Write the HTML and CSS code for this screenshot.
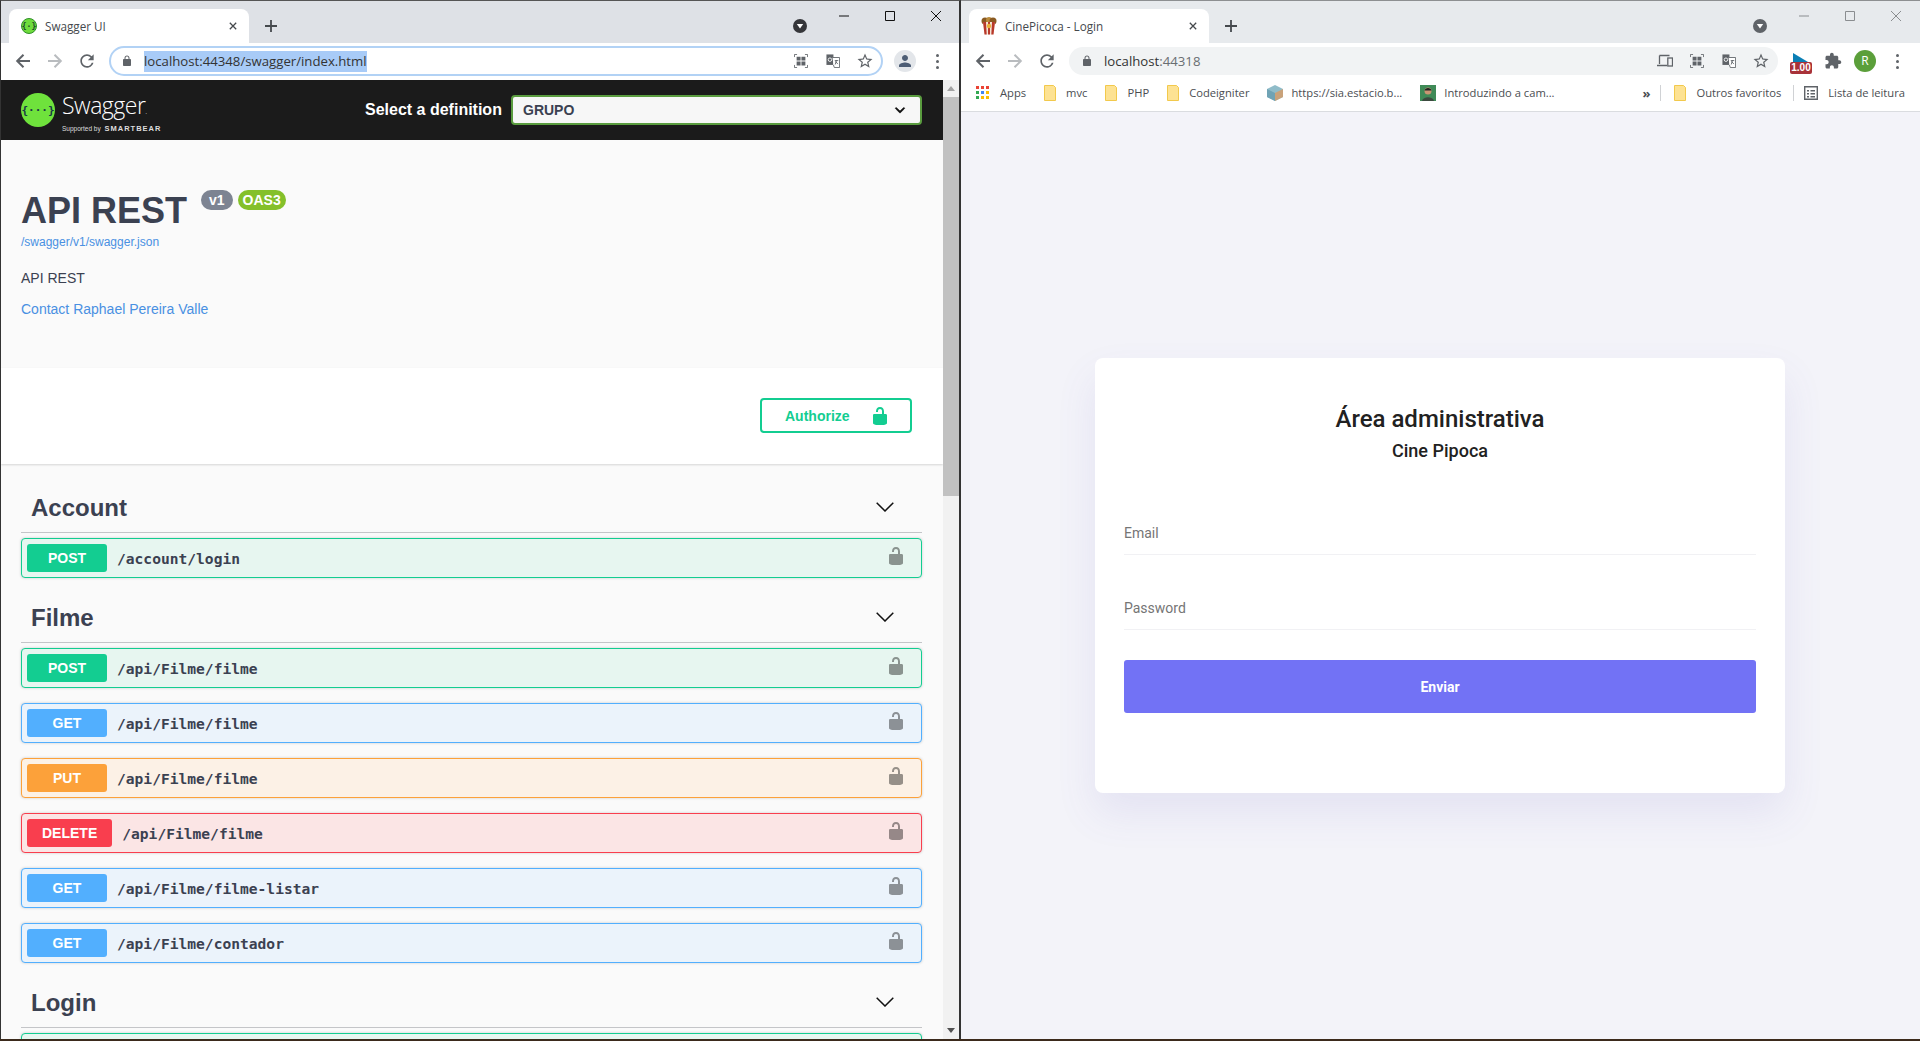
FILE: index.html
```html
<!DOCTYPE html>
<html lang="pt-br">
<head>
    <meta charset="UTF-8">
    <meta name="viewport" content="width=device-width, initial-scale=1.0">
    <title>Swagger UI e CinePicoca - Login</title>
    <link rel="stylesheet" href="styles.css">
</head>
<body>
    <svg class="icon-defs" aria-hidden="true">
        <symbol id="i-back" viewBox="0 0 16 16"><path d="M15 8H2.5M8.5 1.7 2.2 8l6.3 6.3" fill="none" stroke="currentColor" stroke-width="2"/></symbol>
        <symbol id="i-forward" viewBox="0 0 16 16"><path d="M1 8h12.5M7.5 1.7 13.8 8l-6.3 6.3" fill="none" stroke="currentColor" stroke-width="2"/></symbol>
        <symbol id="i-reload" viewBox="0 0 24 24"><path d="M17.65 6.35A7.958 7.958 0 0 0 12 4c-4.42 0-7.99 3.58-7.99 8s3.57 8 7.99 8c3.73 0 6.84-2.55 7.73-6h-2.08A5.99 5.99 0 0 1 12 18c-3.31 0-6-2.69-6-6s2.69-6 6-6c1.66 0 3.14.69 4.22 1.78L13 11h7V4l-2.35 2.35z" fill="currentColor"/></symbol>
        <symbol id="i-lock" viewBox="0 0 24 24"><path d="M18 8h-1V6c0-2.76-2.24-5-5-5S7 3.24 7 6v2H6c-1.1 0-2 .9-2 2v10c0 1.1.9 2 2 2h12c1.1 0 2-.9 2-2V10c0-1.1-.9-2-2-2zM9 6c0-1.66 1.34-3 3-3s3 1.34 3 3v2H9V6z" fill="currentColor"/></symbol>
        <symbol id="i-star" viewBox="0 0 24 24"><path d="M22 9.24l-7.19-.62L12 2 9.19 8.63 2 9.24l5.46 4.73L5.82 21 12 17.27 18.18 21l-1.63-7.03L22 9.24zM12 15.4l-3.76 2.27 1-4.28-3.32-2.88 4.38-.38L12 6.1l1.71 4.04 4.38.38-3.32 2.88 1 4.28L12 15.4z" fill="currentColor"/></symbol>
        <symbol id="i-qr" viewBox="0 0 16 16"><path d="M.5 3.500v-3h3M12.500.5h3v3M15.500 12.500v3h-3M3.500 15.500h-3v-3" fill="none" stroke="currentColor"/><path d="M3 3h4.500v4.500H3zM8.500 3H13v4.500H8.500zM3 8.500h4.500V13H3zM8.500 8.500H13V13H8.500z" fill="currentColor"/></symbol>
        <symbol id="i-translate" viewBox="0 0 16 16"><path d="M.5.5h8v12h-8z" fill="currentColor"/><path d="M7.500 4h8v11.500h-6l-1-3" fill="#fff" stroke="currentColor"/><circle cx="4.500" cy="6.500" r="2" fill="none" stroke="#fff"/><path d="M10 7.500h4M12 7l-1.500 5M11 8.500l2.500 3" fill="none" stroke="currentColor"/></symbol>
        <symbol id="i-devices" viewBox="0 0 16 16"><path d="M2.500 2.500h10M2.500 2.500v8.500M0 12.500h10" fill="none" stroke="currentColor" stroke-width="1.300"/><rect x="10.800" y="5" width="4.700" height="8" fill="none" stroke="currentColor" stroke-width="1.300"/></symbol>
        <symbol id="i-person" viewBox="0 0 24 24"><path d="M12 12c2.210 0 4-1.790 4-4s-1.790-4-4-4-4 1.790-4 4 1.790 4 4 4zm0 2c-2.670 0-8 1.340-8 4v2h16v-2c0-2.660-5.330-4-8-4z" fill="currentColor"/></symbol>
        <symbol id="i-puzzle" viewBox="0 0 24 24"><path d="M20.500 11H19V7c0-1.100-.9-2-2-2h-4V3.500C13 2.120 11.880 1 10.500 1S8 2.120 8 3.500V5H4c-1.100 0-1.990.9-1.990 2v3.800H3.500c1.490 0 2.700 1.210 2.700 2.700s-1.210 2.700-2.700 2.700H2V20c0 1.100.9 2 2 2h3.800v-1.500c0-1.490 1.210-2.700 2.700-2.700 1.490 0 2.700 1.210 2.700 2.700V22H17c1.100 0 2-.9 2-2v-4h1.500c1.380 0 2.500-1.120 2.500-2.500S21.880 11 20.500 11z" fill="currentColor"/></symbol>
        <symbol id="i-close" viewBox="0 0 10 10"><path d="M1 1l8 8M9 1 1 9" fill="none" stroke="currentColor" stroke-width="1.600"/></symbol>
        <symbol id="i-plus" viewBox="0 0 12 12"><path d="M6 0v12M0 6h12" fill="none" stroke="currentColor" stroke-width="1.800"/></symbol>
        <symbol id="i-tabsearch" viewBox="0 0 14 14"><circle cx="7" cy="7" r="7" fill="currentColor"/><path d="M3.800 5h6.400L7 9.500z" fill="#fff"/></symbol>
        <symbol id="i-min" viewBox="0 0 10 10"><path d="M0 5h10" fill="none" stroke="currentColor"/></symbol>
        <symbol id="i-max" viewBox="0 0 10 10"><path d="M.5.5h9v9h-9z" fill="none" stroke="currentColor"/></symbol>
        <symbol id="i-winclose" viewBox="0 0 10 10"><path d="M0 0l10 10M10 0 0 10" fill="none" stroke="currentColor"/></symbol>
        <symbol id="i-folder" viewBox="0 0 12 16"><path d="M.5.5h9l2 2v13H.5z" fill="#fde293" stroke="#f2c94c"/></symbol>
        <symbol id="i-apps" viewBox="0 0 14 14">
            <path d="M0 0h3v3H0z" fill="#ea4335"/><path d="M5 0h3v3H5z" fill="#ea4335"/><path d="M10 0h3v3h-3z" fill="#ea4335"/>
            <path d="M0 5h3v3H0z" fill="#34a853"/><path d="M5 5h3v3H5z" fill="#4285f4"/><path d="M10 5h3v3h-3z" fill="#fbbc04"/>
            <path d="M0 10h3v3H0z" fill="#34a853"/><path d="M5 10h3v3H5z" fill="#fbbc04"/><path d="M10 10h3v3h-3z" fill="#fbbc04"/>
        </symbol>
        <symbol id="i-popcorn" viewBox="0 0 16 18">
            <circle cx="4" cy="4" r="3.500" fill="#8a5a22"/><circle cx="8" cy="3" r="3" fill="#b98a3c"/><circle cx="12" cy="4" r="3.500" fill="#8a5a22"/>
            <path d="M2 5h12l-1.500 12.500h-9z" fill="#f4e6d8"/>
            <path d="M2 5h3l.7 12.500H3.500zM11 5h3l-1.500 12.500h-2.200zM7 5h2v12.500H7z" fill="#b8392b"/>
            <circle cx="8" cy="9" r="2.200" fill="#e8b23a"/>
        </symbol>
        <symbol id="i-swagger-lock" viewBox="0 0 20 20"><path d="M15.800 8H14V5.600C14 2.703 12.665 1 10 1 7.334 1 6 2.703 6 5.600V6h2v-.801C8 3.754 8.797 3 10 3c1.203 0 2 .754 2 2.199V8H4c-.553 0-1 .646-1 1.199V17c0 .549.428 1.139.951 1.307l1.197.387C5.672 18.861 6.550 19 7.100 19h5.800c.549 0 1.428-.139 1.951-.307l1.196-.387c.524-.167.953-.757.953-1.306V9.199C17 8.646 16.352 8 15.800 8z" fill="currentColor"/></symbol>
        <symbol id="i-chevron" viewBox="0 0 18 10"><path d="M.7.7 9 9l8.300-8.300" fill="none" stroke="currentColor" stroke-width="1.500"/></symbol>
    </svg>

    <div class="desktop">
        <!-- janela da esquerda: swagger -->
        <section class="window window-active">
            <div class="tabstrip">
                <div class="tab">
                    <svg class="favicon" viewBox="0 0 16 16"><circle cx="8" cy="8" r="7.500" fill="#6fdc3c" stroke="#2f8f2a"/><text x="8" y="10.500" text-anchor="middle" class="favicon-text">{·}</text></svg>
                    <span class="tab-title">Swagger UI</span>
                    <svg class="tab-close"><use href="#i-close"/></svg>
                </div>
                <svg class="tab-new"><use href="#i-plus"/></svg>
                <svg class="tab-search"><use href="#i-tabsearch"/></svg>
                <div class="win-controls">
                    <span class="win-btn"><svg><use href="#i-min"/></svg></span>
                    <span class="win-btn"><svg><use href="#i-max"/></svg></span>
                    <span class="win-btn"><svg><use href="#i-winclose"/></svg></span>
                </div>
            </div>
            <div class="toolbar">
                <span class="nav-btn"><svg class="ic-16"><use href="#i-back"/></svg></span>
                <span class="nav-btn nav-off"><svg class="ic-16"><use href="#i-forward"/></svg></span>
                <span class="nav-btn"><svg class="ic-20"><use href="#i-reload"/></svg></span>
                <div class="omnibox omnibox-focus">
                    <svg class="omni-lock"><use href="#i-lock"/></svg>
                    <span class="omni-url omni-selected">localhost:44348/swagger/index.html</span>
                    <span class="omni-icons">
                        <span class="omni-icon"><svg class="ic-14"><use href="#i-qr"/></svg></span>
                        <span class="omni-icon"><svg class="ic-14"><use href="#i-translate"/></svg></span>
                        <span class="omni-icon"><svg class="ic-18"><use href="#i-star"/></svg></span>
                    </span>
                </div>
                <span class="tool-btn tool-first"><span class="avatar-gray"><svg class="ic-18"><use href="#i-person"/></svg></span></span>
                <span class="tool-btn"><span class="dots"><i></i><i></i><i></i></span></span>
            </div>

            <div class="page-scroll">
                <div class="swagger">
                    <div class="topbar">
                        <div class="sw-logo">
                            <svg class="sw-mark" viewBox="0 0 34 34"><circle cx="17" cy="17" r="17" fill="#6fe23c"/><text x="17" y="21" text-anchor="middle" class="sw-mark-text">{···}</text></svg>
                            <div class="sw-words">
                                <span class="sw-name">Swagger<small>.</small></span>
                                <span class="sw-sub">Supported by <b>SMARTBEAR</b></span>
                            </div>
                        </div>
                        <span class="def-label">Select a definition</span>
                        <div class="def-select">
                            <span>GRUPO</span>
                            <svg class="def-chevron" viewBox="0 0 20 20"><path d="M13.418 7.859a.695.695 0 0 1 .978 0 .680.680 0 0 1 0 .969l-3.908 3.830a.697.697 0 0 1-.979 0l-3.908-3.830a.680.680 0 0 1 0-.969.695.695 0 0 1 .978 0L10 11z" fill="currentColor" stroke="currentColor" stroke-width=".6"/></svg>
                        </div>
                    </div>

                    <div class="info">
                        <div class="info-title">
                            <h1>API REST</h1>
                            <span class="badge badge-version">v1</span>
                            <span class="badge badge-oas">OAS3</span>
                        </div>
                        <a class="info-json">/swagger/v1/swagger.json</a>
                        <p class="info-desc">API REST</p>
                        <a class="info-contact">Contact Raphael Pereira Valle</a>
                    </div>

                    <div class="scheme">
                        <button class="authorize">Authorize <svg><use href="#i-swagger-lock"/></svg></button>
                    </div>

                    <div class="tags">
                        <h2 class="tag">Account <svg><use href="#i-chevron"/></svg></h2>
                        <div class="op op-post"><span class="method">POST</span><span class="path">/account/login</span><svg class="op-lock"><use href="#i-swagger-lock"/></svg></div>

                        <h2 class="tag">Filme <svg><use href="#i-chevron"/></svg></h2>
                        <div class="op op-post"><span class="method">POST</span><span class="path">/api/Filme/filme</span><svg class="op-lock"><use href="#i-swagger-lock"/></svg></div>
                        <div class="op op-get"><span class="method">GET</span><span class="path">/api/Filme/filme</span><svg class="op-lock"><use href="#i-swagger-lock"/></svg></div>
                        <div class="op op-put"><span class="method">PUT</span><span class="path">/api/Filme/filme</span><svg class="op-lock"><use href="#i-swagger-lock"/></svg></div>
                        <div class="op op-delete"><span class="method">DELETE</span><span class="path">/api/Filme/filme</span><svg class="op-lock"><use href="#i-swagger-lock"/></svg></div>
                        <div class="op op-get"><span class="method">GET</span><span class="path">/api/Filme/filme-listar</span><svg class="op-lock"><use href="#i-swagger-lock"/></svg></div>
                        <div class="op op-get"><span class="method">GET</span><span class="path">/api/Filme/contador</span><svg class="op-lock"><use href="#i-swagger-lock"/></svg></div>

                        <h2 class="tag">Login <svg><use href="#i-chevron"/></svg></h2>
                        <div class="op op-post"></div>
                    </div>
                </div>
                <div class="scrollbar">
                    <span class="scroll-arrow scroll-up"></span>
                    <span class="scroll-thumb"></span>
                    <span class="scroll-arrow scroll-down"></span>
                </div>
            </div>
        </section>

        <!-- janela da direita: login -->
        <section class="window window-idle">
            <div class="tabstrip">
                <div class="tab">
                    <svg class="favicon"><use href="#i-popcorn"/></svg>
                    <span class="tab-title">CinePicoca - Login</span>
                    <svg class="tab-close"><use href="#i-close"/></svg>
                </div>
                <svg class="tab-new"><use href="#i-plus"/></svg>
                <svg class="tab-search"><use href="#i-tabsearch"/></svg>
                <div class="win-controls">
                    <span class="win-btn"><svg><use href="#i-min"/></svg></span>
                    <span class="win-btn"><svg><use href="#i-max"/></svg></span>
                    <span class="win-btn"><svg><use href="#i-winclose"/></svg></span>
                </div>
            </div>
            <div class="toolbar">
                <span class="nav-btn"><svg class="ic-16"><use href="#i-back"/></svg></span>
                <span class="nav-btn nav-off"><svg class="ic-16"><use href="#i-forward"/></svg></span>
                <span class="nav-btn"><svg class="ic-20"><use href="#i-reload"/></svg></span>
                <div class="omnibox">
                    <svg class="omni-lock"><use href="#i-lock"/></svg>
                    <span class="omni-url">localhost<span class="omni-port">:44318</span></span>
                    <span class="omni-icons">
                        <span class="omni-icon"><svg class="ic-16"><use href="#i-devices"/></svg></span>
                        <span class="omni-icon"><svg class="ic-14"><use href="#i-qr"/></svg></span>
                        <span class="omni-icon"><svg class="ic-14"><use href="#i-translate"/></svg></span>
                        <span class="omni-icon"><svg class="ic-18"><use href="#i-star"/></svg></span>
                    </span>
                </div>
                <span class="tool-btn tool-ext">
                    <span class="ext-flag"></span>
                    <span class="ext-badge">1.00</span>
                </span>
                <span class="tool-btn"><svg class="ic-18"><use href="#i-puzzle"/></svg></span>
                <span class="tool-btn"><span class="avatar-green">R</span></span>
                <span class="tool-btn"><span class="dots"><i></i><i></i><i></i></span></span>
            </div>
            <div class="bookmarks">
                <span class="bm bm-apps"><svg class="ic-14"><use href="#i-apps"/></svg>Apps</span>
                <span class="bm"><svg class="bm-folder"><use href="#i-folder"/></svg>mvc</span>
                <span class="bm"><svg class="bm-folder"><use href="#i-folder"/></svg>PHP</span>
                <span class="bm"><svg class="bm-folder"><use href="#i-folder"/></svg>Codeigniter</span>
                <span class="bm">
                    <svg class="bm-pic" viewBox="0 0 16 16"><path d="M8 0l8 4v8l-8 4-8-4V4z" fill="#8fbcc9"/><path d="M8 8l8-4v8l-8 4z" fill="#c9a27a"/><path d="M0 4l8 4v8l-8-4z" fill="#6fa3b5"/></svg>
                    https://sia.estacio.b...
                </span>
                <span class="bm">
                    <svg class="bm-pic" viewBox="0 0 16 16"><rect width="16" height="16" fill="#3f8a57"/><circle cx="8" cy="6" r="3.500" fill="#c99572"/><path d="M4.500 5.500C5 2 11 2 11.500 5.500z" fill="#222"/><path d="M2 16c1-5 11-5 12 0z" fill="#3c4a3f"/></svg>
                    Introduzindo a cam...
                </span>
                <span class="bm-more">»</span>
                <span class="bm-sep"></span>
                <span class="bm"><svg class="bm-folder"><use href="#i-folder"/></svg>Outros favoritos</span>
                <span class="bm-sep bm-sep-2"></span>
                <span class="bm bm-reading">
                    <svg class="ic-14" viewBox="0 0 14 14"><path d="M.7.7h12.600v12.600H.7z" fill="none" stroke="#5f6368" stroke-width="1.400"/><path d="M3 4h2v1.500H3zM3 7h2v1.500H3zM3 10h2v1.500H3zM6.500 4h4.500v1.500H6.500zM6.500 7h4.500v1.500H6.500zM6.500 10h4.500v1.500H6.500z" fill="#5f6368"/></svg>
                    Lista de leitura
                </span>
            </div>

            <div class="login-page">
                <form class="login-card">
                    <h3>Área administrativa</h3>
                    <h4>Cine Pipoca</h4>
                    <div class="field">Email</div>
                    <div class="field">Password</div>
                    <button class="send" type="button">Enviar</button>
                </form>
            </div>
        </section>
    </div>
</body>
</html>
```

FILE: styles.css
```css
* {
    box-sizing: border-box;
}
html, body {
    margin: 0;
    height: 100%;
    overflow: hidden;
}
body {
    background-color: #3b2a1c;
    font-family: "Open Sans", sans-serif;
    color: #3c4043;
}
svg {
    display: block;
    flex: none;
}
.icon-defs {
    width: 0;
    height: 0;
    overflow: hidden;
    position: absolute;
}
.ic-14 { width: 14px; height: 14px; }
.ic-16 { width: 16px; height: 16px; }
.ic-18 { width: 18px; height: 18px; }
.ic-20 { width: 20px; height: 20px; }

.desktop {
    display: flex;
    height: 1039px;
}

/* janelas */
.window {
    display: flex;
    flex-direction: column;
    height: 100%;
    overflow: hidden;
}
.window-active {
    width: 961px;
    background-color: #fff;
    border-top: 1px solid #555;
    border-left: 1px solid #333;
    border-right: 2px solid #333;
}
.window-idle {
    width: 959px;
    background-color: #fff;
    border-top: 1px solid #8d8f91;
}

/* abas */
.tabstrip {
    display: flex;
    align-items: flex-start;
    height: 42px;
    flex: none;
    padding-left: 8px;
    background-color: #dee1e6;
}
.window-idle .tabstrip {
    background-color: #e7eaed;
}
.tab {
    display: flex;
    align-items: center;
    width: 240px;
    height: 34px;
    margin-top: 8px;
    padding: 0 12px;
    background-color: #fff;
    border-radius: 8px 8px 0 0;
}
.favicon {
    width: 16px;
    height: 18px;
}
.favicon-text {
    font-family: "DejaVu Sans Mono", monospace;
    font-size: 8px;
    font-weight: bold;
    fill: #1c4d2a;
}
.tab-title {
    flex: 1;
    margin-left: 8px;
    font-size: 11.700px;
    color: #45494d;
    white-space: nowrap;
}
.tab-close {
    width: 8px;
    height: 8px;
    color: #45494d;
}
.tab-new {
    width: 12px;
    height: 12px;
    margin: 19px 0 0 16px;
    color: #45494d;
}
.tab-search {
    width: 14px;
    height: 14px;
    margin: 18px 14px 0 auto;
    color: #35363a;
}
.window-idle .tab-search {
    color: #5f6368;
}
.win-controls {
    display: flex;
}
.win-btn {
    display: flex;
    align-items: center;
    justify-content: center;
    width: 46px;
    height: 29px;
    color: #111;
}
.win-btn svg {
    width: 10px;
    height: 10px;
}
.window-idle .win-btn {
    color: #8a8d90;
}
.window-idle .win-controls {
    margin-right: 1px;
}

/* barra de endereco */
.toolbar {
    display: flex;
    align-items: center;
    height: 37px;
    flex: none;
    padding: 0 0 1px 6px;
    background-color: #fff;
}
.nav-btn {
    display: flex;
    align-items: center;
    justify-content: center;
    width: 32px;
    height: 28px;
    color: #5f6368;
}
.nav-off {
    color: #b9bcbf;
}
.omnibox {
    display: flex;
    align-items: center;
    width: 709px;
    height: 28px;
    margin-left: 6px;
    padding-left: 12px;
    background-color: #f1f3f4;
    border-radius: 14px;
}
.omnibox-focus {
    width: 774px;
    height: 30px;
    background-color: #fff;
    border: 2px solid #b2d2f5;
    border-radius: 15px;
    padding-left: 10px;
}
.omni-lock {
    width: 12px;
    height: 12px;
    color: #5f6368;
}
.omni-url {
    margin-left: 11px;
    font-size: 13.200px;
    line-height: 21px;
    color: #333;
}
.omni-selected {
    background-color: #a8cbf7;
}
.omni-port {
    color: #6a6e72;
}
.omni-icons {
    display: flex;
    margin-left: auto;
    margin-right: 1px;
    color: #5f6368;
}
.omnibox-focus .omni-icons {
    margin-right: 0;
}
.omni-icon {
    display: flex;
    align-items: center;
    justify-content: center;
    width: 32px;
    height: 24px;
}
.tool-btn {
    display: flex;
    align-items: center;
    justify-content: center;
    width: 32px;
    height: 28px;
    color: #5f6368;
}
.tool-first {
    margin-left: 6px;
}
.avatar-gray {
    display: flex;
    align-items: center;
    justify-content: center;
    width: 22px;
    height: 22px;
    background-color: #e3e6ea;
    border-radius: 50%;
    color: #4d5d75;
}
.avatar-green {
    width: 22px;
    height: 22px;
    background-color: #5b9f3a;
    border-radius: 50%;
    color: #fff;
    font-size: 12px;
    line-height: 22px;
    text-align: center;
}
.dots {
    display: flex;
    flex-direction: column;
    gap: 3px;
}
.dots i {
    width: 3px;
    height: 3px;
    background-color: #5f6368;
    border-radius: 50%;
}
.tool-ext {
    position: relative;
    margin-left: 7px;
}
.ext-flag {
    width: 0;
    height: 0;
    margin: -7px 0 0 -2px;
    border-left: 15px solid #0a7fb5;
    border-top: 9px solid transparent;
    border-bottom: 0 solid transparent;
}
.ext-badge {
    position: absolute;
    left: 5px;
    top: 15px;
    width: 22px;
    height: 12px;
    background-color: #a83239;
    border-radius: 2px;
    color: #fff;
    font-family: "Liberation Sans", sans-serif;
    font-size: 10px;
    font-weight: bold;
    line-height: 12px;
    text-align: center;
}

/* favoritos */
.bookmarks {
    display: flex;
    align-items: center;
    height: 32px;
    flex: none;
    padding: 0 0 6px 15px;
    background-color: #fff;
    border-bottom: 1px solid #dadce0;
    font-size: 11.200px;
    color: #4a4d51;
    white-space: nowrap;
}
.bm {
    display: flex;
    align-items: center;
    gap: 10px;
    margin-right: 18px;
}
.bm-folder {
    width: 12px;
    height: 16px;
}
.bm-pic {
    width: 16px;
    height: 16px;
    margin-right: -2px;
}
.bm-more {
    margin-left: auto;
    margin-right: 10px;
    font-size: 13px;
    font-weight: bold;
}
.bm-sep {
    width: 1px;
    height: 16px;
    margin-right: 13px;
    background-color: #d0d2d5;
}
.bm-sep-2 {
    margin-left: -6px;
    margin-right: 10px;
}
.bm-reading {
    margin-right: 15px;
}

/* swagger */
.page-scroll {
    display: flex;
    flex: 1;
    min-height: 0;
}
.swagger {
    flex: 1;
    min-width: 0;
    overflow: hidden;
    font-family: "Liberation Sans", sans-serif;
    background-color: #fafafa;
    color: #3b4151;
}
.topbar {
    display: flex;
    align-items: center;
    height: 60px;
    padding: 0 20px;
    background-color: #1b1b1b;
}
.sw-logo {
    display: flex;
    align-items: center;
    gap: 7px;
    width: 344px;
}
.sw-mark {
    width: 34px;
    height: 34px;
}
.sw-mark-text {
    font-family: "DejaVu Sans Mono", monospace;
    font-size: 11px;
    font-weight: bold;
    fill: #173647;
}
.sw-words {
    display: flex;
    flex-direction: column;
    padding-top: 4px;
    color: #fff;
}
.sw-name {
    font-family: "Open Sans", sans-serif;
    font-size: 23px;
    font-weight: 300;
    line-height: 26px;
    letter-spacing: -.5px;
}
.sw-name small {
    font-size: 8px;
}
.sw-sub {
    font-size: 6.500px;
    line-height: 9px;
    color: #ddd;
}
.sw-sub b {
    margin-left: 2px;
    font-size: 7.500px;
    letter-spacing: 1px;
}
.def-label {
    width: 146px;
    font-size: 16px;
    font-weight: bold;
    color: #fff;
    white-space: nowrap;
}
.def-select {
    display: flex;
    align-items: center;
    justify-content: space-between;
    width: 411px;
    height: 30px;
    padding: 0 10px;
    background-color: #f7f7f7;
    border: 2px solid #5a9c3f;
    border-radius: 4px;
    font-size: 14px;
    font-weight: bold;
}
.def-chevron {
    width: 20px;
    height: 20px;
    color: #111;
}
.info {
    height: 228px;
    padding: 50px 20px 0;
}
.info-title {
    display: flex;
    align-items: flex-start;
    height: 42px;
}
.info-title h1 {
    margin: 0 14px 0 0;
    font-size: 36px;
    line-height: 42px;
}
.badge {
    height: 20px;
    margin-right: 5px;
    padding: 0 8px;
    border-radius: 10px;
    color: #fff;
    font-size: 14px;
    font-weight: bold;
    line-height: 20px;
}
.badge-version {
    background-color: #7d8492;
}
.badge-oas {
    padding: 0 5px;
    background-color: #84c02a;
}
.info-json {
    display: block;
    margin-top: 3px;
    font-size: 12px;
    line-height: 14px;
    color: #4990e2;
}
.info-desc {
    margin: 21px 0 0;
    font-size: 14px;
    line-height: 16px;
}
.info-contact {
    display: block;
    margin-top: 15px;
    font-size: 14px;
    line-height: 16px;
    color: #4990e2;
}
.scheme {
    display: flex;
    justify-content: flex-end;
    height: 96px;
    padding: 30px 31px 0 0;
    background-color: #fff;
    box-shadow: 0 1px 2px 0 rgba(0, 0, 0, .15);
}
.authorize {
    display: flex;
    align-items: center;
    justify-content: space-between;
    width: 152px;
    height: 35px;
    padding: 0 23px;
    background-color: transparent;
    border: 2px solid #13cd91;
    border-radius: 4px;
    font-family: "Liberation Sans", sans-serif;
    font-size: 14px;
    font-weight: bold;
    color: #13cd91;
}
.authorize svg {
    width: 20px;
    height: 20px;
    margin-right: -3px;
}
.tags {
    padding: 19px 21px 0 20px;
}
.tag {
    display: flex;
    align-items: center;
    justify-content: space-between;
    height: 50px;
    margin: 0 0 5px;
    padding: 0 28px 0 10px;
    border-bottom: 1px solid #c4c5c8;
    font-size: 24px;
    font-weight: bold;
}
.tag svg {
    width: 18px;
    height: 10px;
    margin-top: -2px;
    color: #111;
}
.op {
    display: flex;
    align-items: center;
    height: 40px;
    margin-bottom: 15px;
    padding: 0 15px 0 5px;
    border: 1px solid;
    border-radius: 4px;
    box-shadow: 0 0 3px rgba(0, 0, 0, .19);
}
.method {
    min-width: 80px;
    padding: 6px 15px;
    border-radius: 3px;
    color: #fff;
    font-size: 14px;
    font-weight: bold;
    line-height: 16px;
    text-align: center;
}
.path {
    flex: 1;
    margin-left: 10px;
    padding-top: 1px;
    font-family: "DejaVu Sans Mono", monospace;
    font-size: 14.600px;
    font-weight: bold;
}
.op-lock {
    width: 20px;
    height: 20px;
    margin-top: -4px;
    color: #000;
    opacity: .4;
}
.op-post { background-color: #e7f6f0; border-color: #13cd91; }
.op-post .method { background-color: #13cd91; }
.op-get { background-color: #ebf3fb; border-color: #52affe; }
.op-get .method { background-color: #52affe; }
.op-put { background-color: #fcf1e6; border-color: #fca13a; }
.op-put .method { background-color: #fca13a; }
.op-delete { background-color: #fbe5e5; border-color: #f93e4e; }
.op-delete .method { background-color: #f93e4e; }

.scrollbar {
    display: flex;
    flex-direction: column;
    align-items: center;
    width: 16px;
    flex: none;
    background-color: #f1f1f1;
}
.scroll-arrow {
    width: 0;
    height: 0;
    border-left: 4px solid transparent;
    border-right: 4px solid transparent;
}
.scroll-up {
    margin: 6px 0;
    border-bottom: 5px solid #a3a3a3;
}
.scroll-thumb {
    width: 100%;
    height: 399px;
    background-color: #c1c1c1;
}
.scroll-down {
    margin-top: auto;
    margin-bottom: 6px;
    border-top: 5px solid #505050;
}

/* login */
.login-page {
    display: flex;
    align-items: center;
    justify-content: center;
    flex: 1;
    padding-right: 1px;
    background-color: #f3f3f9;
    font-family: Roboto, sans-serif;
}
.login-card {
    width: 690px;
    height: 435px;
    padding: 46px 29px 0;
    background-color: #fff;
    border-radius: 8px;
    box-shadow: 0 20px 40px rgba(100, 90, 190, .1);
    text-align: center;
}
.login-card h3 {
    margin: 0;
    font-size: 24px;
    font-weight: 500;
    line-height: 30px;
    color: #212121;
}
.login-card h4 {
    margin: 5px 0 45px;
    font-size: 18px;
    font-weight: 500;
    line-height: 24px;
    color: #212121;
}
.field {
    height: 62px;
    padding-top: 32px;
    margin-top: -15px;
    border-bottom: 1px solid #f1f1f4;
    color: #757575;
    font-size: 14px;
    line-height: 16px;
    text-align: left;
}
.field + .field {
    margin-top: 13px;
}
.send {
    display: block;
    width: 100%;
    height: 53px;
    margin-top: 30px;
    background-color: #7272f5;
    border: none;
    border-radius: 3px;
    color: #fff;
    font-family: Roboto, sans-serif;
    font-size: 14px;
    font-weight: bold;
}
```
